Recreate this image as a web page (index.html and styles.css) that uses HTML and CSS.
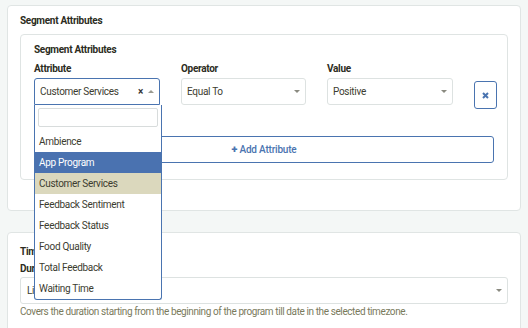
FILE: index.html
```html
<!DOCTYPE html>
<html lang="en">
<head>
    <meta charset="UTF-8">
    <meta name="viewport" content="width=device-width, initial-scale=1.0">
    <title>Segment Attributes</title>
    <link rel="stylesheet" href="styles.css">
</head>
<body>
    <div class="page">
        <div class="card">
            <h2 class="card-title">Segment Attributes</h2>

            <div class="inner-card">
                <h3 class="inner-title">Segment Attributes</h3>

                <div class="attr-row">
                    <div class="field">
                        <label>Attribute</label>
                        <div class="select select-open">
                            <span class="select-value">Customer Services</span>
                            <span class="select-clear">&times;</span>
                            <span class="caret caret-up"></span>

                            <div class="dropdown">
                                <input type="text" class="dropdown-search">
                                <ul class="dropdown-list">
                                    <li>Ambience</li>
                                    <li class="is-hover">App Program</li>
                                    <li class="is-selected">Customer Services</li>
                                    <li>Feedback Sentiment</li>
                                    <li>Feedback Status</li>
                                    <li>Food Quality</li>
                                    <li>Total Feedback</li>
                                    <li>Waiting Time</li>
                                </ul>
                            </div>
                        </div>
                    </div>

                    <div class="field">
                        <label>Operator</label>
                        <div class="select">
                            <span class="select-value">Equal To</span>
                            <span class="caret"></span>
                        </div>
                    </div>

                    <div class="field">
                        <label>Value</label>
                        <div class="select">
                            <span class="select-value">Positive</span>
                            <span class="caret"></span>
                        </div>
                    </div>

                    <div class="field field-remove">
                        <button class="btn-remove" type="button">
                            <svg width="7" height="7" viewBox="0 0 7 7">
                                <path d="M1 1 L6 6 M6 1 L1 6" stroke="#4a74b0" stroke-width="2"/>
                            </svg>
                        </button>
                    </div>
                </div>

                <button class="btn-add" type="button"><span class="plus">+</span> Add Attribute</button>
            </div>
        </div>

        <div class="card card-time">
            <h2 class="card-title">Timezone &amp; Duration</h2>
            <label class="label-duration">Duration</label>
            <div class="select select-wide">
                <span class="select-value">Lifetime</span>
                <span class="caret"></span>
            </div>
            <p class="help">Covers the duration starting from the beginning of the program till date in the selected timezone.</p>
        </div>
    </div>
</body>
</html>
```

FILE: styles.css
```css
* {
    margin: 0;
    padding: 0;
    box-sizing: border-box;
}

body {
    font-family: Roboto, 'Liberation Sans', sans-serif;
    background: #f4f7f6;
    color: #34342a;
    font-size: 10px;
    letter-spacing: -0.3px;
    overflow: hidden;
}

.page {
    padding: 5px 7px;
}

.card {
    background: white;
    border: 1px solid #e0e5e4;
    border-radius: 4px;
    padding: 7px 12px 30px;
}

.card-title {
    font-size: 10px;
    font-weight: 700;
    line-height: 16px;
    color: #2c2c22;
}

.inner-card {
    margin-top: 5px;
    border: 1px solid #dfe4e3;
    border-radius: 4px;
    padding: 7px 13px 16px;
}

.inner-title {
    font-size: 10px;
    font-weight: 700;
    line-height: 16px;
    color: #2c2c22;
}

.attr-row {
    display: grid;
    grid-template-columns: 126px 125px 126px 23px;
    column-gap: 21px;
    margin-top: 4px;
}

.field label {
    display: block;
    font-weight: 700;
    line-height: 14px;
    margin-bottom: 2px;
    color: #2c2c22;
}

.select {
    position: relative;
    display: flex;
    align-items: center;
    height: 27px;
    border: 1px solid #dde2e1;
    border-radius: 3px;
    padding: 0 4px 0 5px;
    background: white;
}

.select-open {
    border-color: #4a74b0;
    border-radius: 3px 3px 0 0;
}

.select-value {
    flex: 1;
    color: #3c3c30;
    white-space: nowrap;
    overflow: hidden;
}

.select-clear {
    font-weight: 700;
    font-size: 10px;
    color: #333;
    margin-right: 5px;
}

.caret {
    width: 0;
    height: 0;
    margin-right: 1px;
    border-left: 3px solid transparent;
    border-right: 3px solid transparent;
    border-top: 3px solid #8a8a80;
}

.caret-up {
    border-top: none;
    border-bottom: 3px solid #9a9a90;
}

.dropdown {
    position: absolute;
    top: 26px;
    left: -1px;
    width: 128px;
    background: white;
    border: 1px solid #4a74b0;
    border-top: none;
    border-radius: 0 0 3px 3px;
    padding-top: 3px;
    z-index: 10;
}

.dropdown-search {
    display: block;
    width: 120px;
    height: 19px;
    margin: 0 0 4px 3px;
    border: 1px solid #d8dcdc;
    border-radius: 2px;
}

.dropdown-list {
    list-style: none;
}

.dropdown-list li {
    height: 21px;
    line-height: 21px;
    padding-left: 4px;
    color: #3c3c30;
}

.dropdown-list .is-hover {
    background: #4a72b0;
    color: white;
}

.dropdown-list .is-selected {
    background: #dbd8bd;
}

.field-remove {
    padding-top: 19px;
}

.btn-remove {
    display: flex;
    align-items: center;
    justify-content: center;
    width: 23px;
    height: 28px;
    background: white;
    border: 1px solid #4a74b0;
    border-radius: 3px;
}

.btn-add {
    display: block;
    width: 100%;
    height: 27px;
    margin-top: 27px;
    background: white;
    border: 1px solid #4a74b0;
    border-radius: 3px;
    font-family: inherit;
    font-size: 10px;
    letter-spacing: -0.2px;
    font-weight: 500;
    color: #4a74b0;
}

.plus {
    font-weight: 900;
    font-size: 11px;
}

.card-time {
    margin-top: 21px;
    padding: 11px 12px 20px;
}

.label-duration {
    display: block;
    margin-top: 2px;
    font-weight: 700;
    line-height: 14px;
    margin-bottom: 1px;
    color: #2c2c22;
}

.select-wide {
    padding-left: 6px;
}

.help {
    margin-top: 2px;
    line-height: 12px;
    font-size: 10px;
    letter-spacing: -0.4px;
    color: #7a7a5c;
}
```
